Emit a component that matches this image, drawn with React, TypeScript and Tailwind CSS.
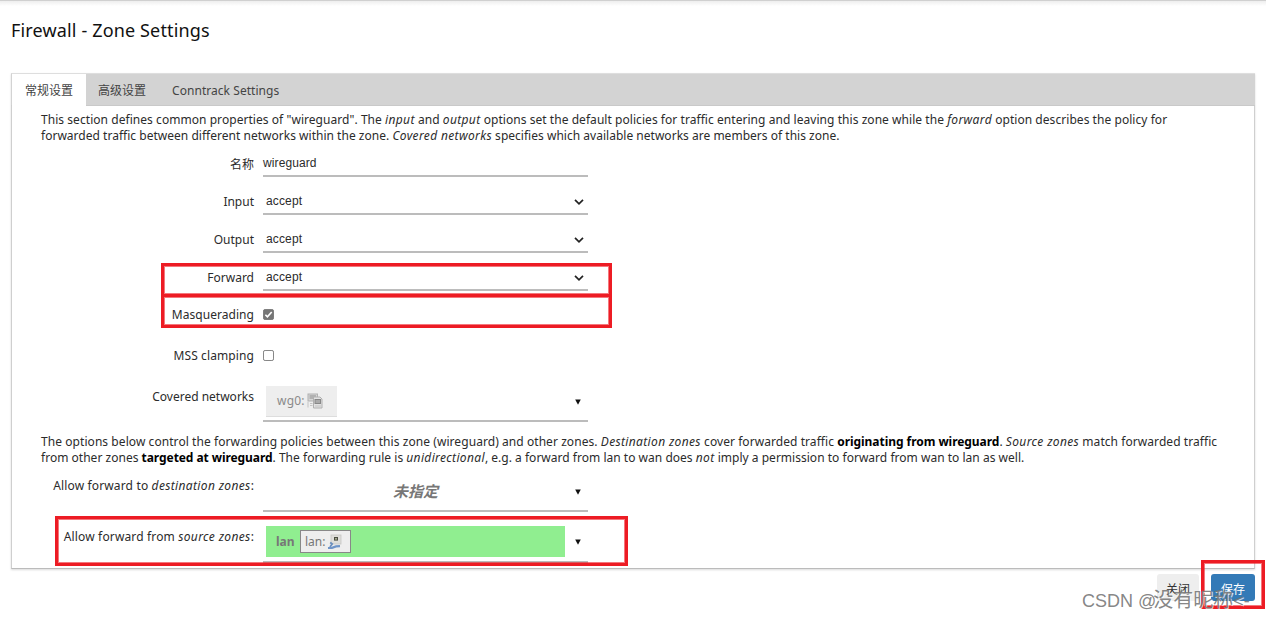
import type { ReactNode } from 'react'
import clsx from 'clsx'

const tabs = [
  { label: '常规设置', active: true, className: 'w-[74px] pl-[13px]' },
  { label: '高级设置', active: false, className: 'w-[74px] pl-[12px]' },
  { label: 'Conntrack Settings', active: false, className: 'pl-[12px] tracking-[0.05px]' },
]

const selects = [
  { label: 'Input', value: 'accept', className: 'h-[38px]' },
  { label: 'Output', value: 'accept', className: 'h-[38px]' },
  { label: 'Forward', value: 'accept', className: 'h-[38px]' },
]

function Row({ label, className, labelClass, children }: { label: ReactNode; className: string; labelClass: string; children: ReactNode }) {
  return (
    <div className={clsx('flex', className)}>
      <div className={clsx('w-[242px] shrink-0 text-right text-[12px] leading-4 whitespace-nowrap', labelClass)}>{label}</div>
      <div className="ml-[9px] w-[325px] flex flex-col justify-end">{children}</div>
    </div>
  )
}

function Em({ children }: { children: ReactNode }) {
  return <i className="tracking-[0.35px]">{children}</i>
}

function Chevron() {
  return (
    <svg className="w-[10px] h-[8px] mt-[2px]" viewBox="0 0 10 8" fill="none" stroke="#222" strokeWidth="1.7">
      <path d="M1 1.8 L5 5.8 L9 1.8" />
    </svg>
  )
}

function Caret() {
  return (
    <svg className="w-[6px] h-[6px] mr-[7px] shrink-0" viewBox="0 0 6 6" fill="#111">
      <path d="M0.2 0.4 H5.8 L3 5.8 Z" />
    </svg>
  )
}

function Checkbox({ checked }: { checked?: boolean }) {
  return (
    <svg className="w-[11px] h-[11px]" viewBox="0 0 12 12">
      <rect x="0.5" y="0.5" width="11" height="11" rx="1.8" fill={checked ? '#767676' : '#fff'} stroke="#767676" />
      {checked && <path d="M2.6 6.3 L4.8 8.5 L9.5 3.2" fill="none" stroke="#fff" strokeWidth="1.8" />}
    </svg>
  )
}

function TunnelIcon() {
  return (
    <svg className="w-[16px] h-[16px]" viewBox="0 0 16 16" fill="none" stroke="#a3a3a3">
      <rect x="1" y="1" width="9.5" height="7" fill="#d6d6d6" stroke="#b0b0b0" />
      <path d="M2.5 3 H9 M2.5 5 H6" stroke="#8c8c8c" />
      <path d="M1 9 V14.5 M3 10.5 H5.5 M3 12.5 H5.5" stroke="#c4c4c4" />
      <path d="M6.5 4 H13 L15 6 V15 H6.5 Z" fill="#e2e2e2" stroke="#b0b0b0" />
      <rect x="8" y="6.5" width="5.5" height="4" fill="#aaa" stroke="#888" />
      <path d="M8 13 H14" stroke="#c4c4c4" />
    </svg>
  )
}

function EthernetIcon() {
  return (
    <svg className="w-[16px] h-[16px]" viewBox="0 0 16 16">
      <rect x="4" y="1" width="10" height="9" fill="#dededa" stroke="#c6c6c2" strokeWidth="0.8" />
      <rect x="7" y="3" width="4" height="3.6" fill="#4a4d42" />
      <circle cx="9" cy="4.8" r="0.9" fill="#c9cfae" />
      <path d="M3.2 8.5 L5.2 10 L3 13" fill="none" stroke="#6c8fbd" strokeWidth="1.8" />
      <path d="M1 14 L5 13.8 L9 12.4 L13 12.2" fill="none" stroke="#6f95c8" strokeWidth="2.2" />
    </svg>
  )
}

export default function App() {
  return (
    <div className="relative w-[1266px] h-[619px] overflow-hidden bg-white text-[12px] text-[#2b2b2b] font-['Noto_Sans','Noto_Sans_CJK_SC',sans-serif]">
      <div className="h-[6px] border-t border-[#d0d0d0] bg-linear-to-b from-[#eee] to-white" />
      <h1 className="ml-[11px] mt-[12px] h-[55px] text-[18px] leading-[25px] tracking-[0.15px] text-[#111]">Firewall - Zone Settings</h1>

      <main className="ml-[11px] w-[1244px] h-[496px] border border-t-0 border-[#cfcfcf] border-b-[#bbb] shadow-[0_1px_2px_rgba(0,0,0,0.15)]">
        <nav className="-mx-px h-[33px] flex bg-[#d3d3d3] border-t border-b border-t-[#dedede] border-b-[#c9c9c9] border-l border-l-[#d3d3d3] text-[#444]">
          {tabs.map((tab) => (
            <div key={tab.label} className={clsx('h-[32px] leading-[33px] whitespace-nowrap', tab.className, tab.active && 'bg-white')}>
              {tab.label}
            </div>
          ))}
        </nav>

        <div className="ml-[29px] pt-[6px] h-[37px] leading-[15.6px] whitespace-nowrap">
          <p className="tracking-[0.052px]">This section defines common properties of "wireguard". The <Em>input</Em> and <Em>output</Em> options set the default policies for traffic entering and leaving this zone while the <Em>forward</Em> option describes the policy for</p>
          <p className="tracking-[0.02px]">forwarded traffic between different networks within the zone. <Em>Covered networks</Em> specifies which available networks are members of this zone.</p>
        </div>

        <Row label="名称" className="h-[34px]" labelClass="pt-[14px]">
          <div className="h-[28px] pt-[6px] leading-4 border-b-2 border-[#bcbcbc] tracking-[0.1px] font-['Liberation_Sans',sans-serif]">wireguard</div>
        </Row>
        {selects.map((s) => (
          <Row key={s.label} label={s.label} className={s.className} labelClass="pt-[17px]">
            <div className="h-[28px] pt-[1px] pl-[3px] pr-[4px] flex items-center justify-between border-b-2 border-[#bcbcbc] tracking-[0.15px] font-['Liberation_Sans',sans-serif]">
              {s.value}
              <Chevron />
            </div>
          </Row>
        ))}
        <Row label="Masquerading" className="h-[46px]" labelClass="pt-[16px] tracking-[0.05px]">
          <div className="h-[28px]"><Checkbox checked /></div>
        </Row>
        <Row label="MSS clamping" className="h-[41px]" labelClass="pt-[11px] tracking-[0.1px]">
          <div className="h-[28px]"><Checkbox /></div>
        </Row>
        <Row label="Covered networks" className="h-[44px]" labelClass="pt-[11px]">
          <div className="h-[36px] pl-[3px] flex items-start justify-between border-b-2 border-[#bcbcbc]">
            <div className="w-[71px] h-[31px] pl-[11px] flex items-center gap-[2px] bg-[#eee] border-b border-[#ddd] text-[#8a8a8a]">
              <span className="tracking-[0.2px]">wg0:</span>
              <TunnelIcon />
            </div>
            <div className="h-[32px] flex items-center"><Caret /></div>
          </div>
        </Row>

        <div className="ml-[29px] pt-[12px] h-[48px] leading-[15.6px] whitespace-nowrap">
          <p className="tracking-[0.065px]">The options below control the forwarding policies between this zone (wireguard) and other zones. <Em>Destination zones</Em> cover forwarded traffic <b className="text-black tracking-[-0.05px]">originating from wireguard</b>. <Em>Source zones</Em> match forwarded traffic</p>
          <p className="tracking-[0.02px]">from other zones <b className="text-black tracking-[-0.07px]">targeted at wireguard</b>. The forwarding rule is <Em>unidirectional</Em>, e.g. a forward from lan to wan does <Em>not</Em> imply a permission to forward from wan to lan as well.</p>
        </div>

        <Row label={<>Allow forward to <Em>destination zones</Em>:</>} className="h-[42px]" labelClass="pt-[8px] tracking-[0.15px]">
          <div className="h-[36px] pb-[3px] flex items-center border-b-2 border-[#bcbcbc]">
            <span className="flex-1 pr-[7px] text-center text-[15px] font-bold italic text-[#777]">未指定</span>
            <Caret />
          </div>
        </Row>
        <Row label={<>Allow forward from <Em>source zones</Em>:</>} className="h-[51px]" labelClass="pt-[17px] tracking-[0.15px]">
          <div className="h-[37px] pl-[3px] flex items-start justify-between border-b-2 border-[#bcbcbc]">
            <div className="w-[299px] h-[31px] pl-[10px] flex items-center gap-[6px] bg-[#90ee90] text-[#777]">
              <b className="w-[18px]">lan</b>
              <span className="w-[51px] h-[23px] pl-[4px] flex items-center gap-[2px] bg-[#eee] border border-[#888]">
                lan:
                <EthernetIcon />
              </span>
            </div>
            <div className="h-[31px] flex items-center"><Caret /></div>
          </div>
        </Row>
      </main>

      <footer className="mt-[5px] pr-[11px] flex justify-end gap-[12px] leading-[27px] text-center">
        <button className="w-[42px] h-[27px] pt-[2px] rounded-[3px] bg-[#eee] text-[#333]">关闭</button>
        <button className="w-[44px] h-[27px] pt-[2px] rounded-[3px] bg-[#337ab7] text-white">保存</button>
      </footer>

      {/* highlight frames */}
      <div className="absolute left-[161px] top-[263px] w-[451px] h-[34px] border-[3px] border-[#ed1c24] outline-1 -outline-offset-4 outline-[#ed1c24]/60" />
      <div className="absolute left-[161px] top-[294px] w-[451px] h-[34px] border-[3px] border-[#ed1c24] outline-1 -outline-offset-4 outline-[#ed1c24]/60" />
      <div className="absolute left-[55px] top-[516px] w-[573px] h-[50px] border-[3px] border-[#ed1c24] outline-1 -outline-offset-4 outline-[#ed1c24]/60" />
      <div className="absolute left-[1201px] top-[560px] w-[64px] h-[49px] border-[3px] border-[#ed1c24] outline-1 -outline-offset-4 outline-[#ed1c24]/60" />
      <div className="absolute left-[1082px] top-[588px] text-[18px] leading-6 whitespace-nowrap text-[#777]/90 [text-shadow:1px_1px_0_rgba(255,255,255,0.7)] font-['Liberation_Sans','Noto_Sans_CJK_SC',sans-serif]">
        CSDN @<span className="ml-[-3px] text-[20px]">没有昵称</span>&lt;-
      </div>
    </div>
  )
}
